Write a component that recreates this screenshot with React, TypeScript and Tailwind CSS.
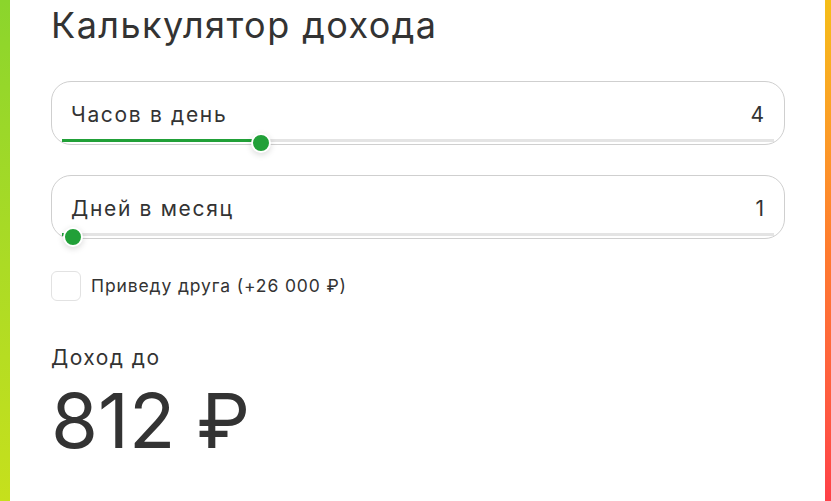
import { useState } from 'react'

const FONT = { fontFamily: 'Inter, "Noto Sans", sans-serif' }

type SliderFieldProps = {
  label: string
  value: number
  percent: number
}

function SliderField({ label, value, percent }: SliderFieldProps) {
  const thumbLeft = `calc(21px + (100% - 42px) * ${percent / 100})`
  return (
    <div className="relative h-[64px] rounded-[20px] border border-[#cfcfcf] bg-white">
      <div className="flex h-full items-center justify-between pl-[19px] pr-[20px] pt-[3px]">
        <span className="text-[21px] tracking-[0.08em] text-[#333]">{label}</span>
        <span className="text-[21px] text-[#333]">{value}</span>
      </div>
      <div className="absolute bottom-[2px] left-[10px] right-[10px] h-[3px] bg-[#e4e4e4]" />
      <div
        className="absolute bottom-[2px] left-[10px] h-[3px] bg-[#21a038]"
        style={{ width: `calc(${thumbLeft} - 10px)` }}
      />
      <div
        className="absolute bottom-[-9px] h-[20px] w-[20px] -translate-x-1/2 rounded-full border-[2px] border-white bg-[#21a038] shadow-[0_2px_6px_rgba(0,0,0,0.15)]"
        style={{ left: thumbLeft }}
      />
    </div>
  )
}

export default function App() {
  const [friend, setFriend] = useState(false)

  return (
    <div className="flex h-[501px] w-[831px] bg-white" style={FONT}>
      <div className="w-[10px] bg-gradient-to-b from-[#8bd52c] to-[#c6e01c]" />
      <div className="flex flex-1 flex-col pl-[41px] pr-[40px]">
        <h1 className="mt-[1px] text-[36px] leading-[48px] tracking-[0.04em] text-[#333]">
          Калькулятор дохода
        </h1>

        <div className="mt-[32px] space-y-[30px]">
          <SliderField label="Часов в день" value={4} percent={27.3} />
          <SliderField label="Дней в месяц" value={1} percent={0} />
        </div>

        <label className="mt-[32px] flex cursor-pointer items-center gap-[10px]">
          <span
            onClick={() => setFriend(!friend)}
            className="h-[30px] w-[30px] rounded-[6px] border border-[#e2e2e2] bg-white"
          />
          <span className="text-[17.5px] tracking-[0.05em] text-[#333]">Приведу друга (+26 000 ₽)</span>
        </label>

        <p className="mt-[41px] text-[21px] tracking-[0.07em] text-[#333]">Доход до</p>
        <p className="mt-[6px] text-[76px] leading-[80px] text-[#333]">812 ₽</p>
      </div>
      <div className="ml-auto w-[6px] bg-gradient-to-b from-[#f5be18] via-[#ff7b2e] to-[#ff4048]" />
    </div>
  )
}
